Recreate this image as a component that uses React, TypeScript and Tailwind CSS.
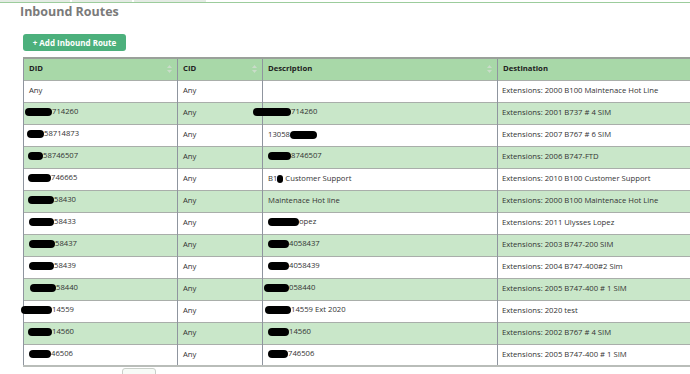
import React from 'react';

type Part = { t?: string; b?: number; ml?: number };

const rows: { did: Part[]; desc: Part[]; dest: string }[] = [
  { did: [{ t: 'Any' }], desc: [], dest: 'Extensions: 2000 B100 Maintenace Hot Line' },
  { did: [{ b: 27, ml: -4 }, { t: '714260' }], desc: [{ b: 38, ml: -15 }, { t: '714260' }], dest: 'Extensions: 2001 B737 # 4 SIM' },
  { did: [{ b: 17, ml: -2 }, { t: '58714873' }], desc: [{ t: '13058' }, { b: 27 }], dest: 'Extensions: 2007 B767 # 6 SIM' },
  { did: [{ b: 15, ml: -1 }, { t: '58746507' }], desc: [{ b: 23 }, { t: '8746507' }], dest: 'Extensions: 2006 B747-FTD' },
  { did: [{ b: 23, ml: -1 }, { t: '746665' }], desc: [{ t: 'B1' }, { b: 6 }, { t: ' Customer Support' }], dest: 'Extensions: 2010 B100 Customer Support' },
  { did: [{ b: 26, ml: -1 }, { t: '58430' }], desc: [{ t: 'Maintenace Hot line' }], dest: 'Extensions: 2000 B100 Maintenace Hot Line' },
  { did: [{ b: 25 }, { t: '58433' }], desc: [{ b: 31 }, { t: 'opez' }], dest: 'Extensions: 2011 Ulysses Lopez' },
  { did: [{ b: 26 }, { t: '58437' }], desc: [{ b: 21 }, { t: '4058437' }], dest: 'Extensions: 2003 B747-200 SIM' },
  { did: [{ b: 25 }, { t: '58439' }], desc: [{ b: 21 }, { t: '4058439' }], dest: 'Extensions: 2004 B747-400#2 Sim' },
  { did: [{ b: 26, ml: 1 }, { t: '58440' }], desc: [{ b: 25, ml: -4 }, { t: '058440' }], dest: 'Extensions: 2005 B747-400 # 1 SIM' },
  { did: [{ b: 31, ml: -8 }, { t: '14559' }], desc: [{ b: 26, ml: -3 }, { t: '14559 Ext 2020' }], dest: 'Extensions: 2020 test' },
  { did: [{ b: 24, ml: -1 }, { t: '14560' }], desc: [{ b: 21 }, { t: '14560' }], dest: 'Extensions: 2002 B767 # 4 SIM' },
  { did: [{ b: 22 }, { t: '46506' }], desc: [{ b: 20 }, { t: '746506' }], dest: 'Extensions: 2005 B747-400 # 1 SIM' },
];

function Cell({ parts }: { parts: Part[] }) {
  return (
    <span className="inline-flex items-center whitespace-pre">
      {parts.map((p, i) =>
        p.b ? (
          <span
            key={i}
            className="inline-block h-[8px] rounded-full bg-black"
            style={{ width: p.b, marginLeft: p.ml ?? 0 }}
          />
        ) : (
          <span key={i}>{p.t}</span>
        )
      )}
    </span>
  );
}

function SortIcon() {
  return (
    <svg width="5" height="8" viewBox="0 0 5 8" className="shrink-0">
      <path d="M2.5 0 L5 3 L0 3 Z" fill="#c9dcc9" />
      <path d="M2.5 8 L5 5 L0 5 Z" fill="#c9dcc9" />
    </svg>
  );
}

export default function App() {
  return (
    <div className="w-[690px] h-[374px] overflow-hidden bg-white" style={{ fontFamily: '"Open Sans", "Liberation Sans", sans-serif' }}>
      <div className="flex h-[3px] border-b border-[#9ccc9c]">
        <div className="w-[70px] bg-[#e4ebe4]" />
        <div className="w-[2px]" />
        <div className="w-[60px] bg-[#e4ebe4]" />
        <div className="w-[2px]" />
        <div className="w-[72px] bg-[#e4ebe4]" />
      </div>
      <h1 className="pl-[20px] pt-[1px] text-[12.5px] leading-[16px] font-bold text-[#7a7a7a]">Inbound Routes</h1>
      <div className="pl-[23px] pt-[14px]">
        <button className="h-[17px] w-[103px] rounded-[3px] bg-[#4cb07c] text-white text-[8px] font-bold leading-none flex items-center justify-center">
          + Add Inbound Route
        </button>
      </div>
      <div className="pl-[23px] pt-[6px]">
        <table className="w-[672px] table-fixed border-collapse text-[7.7px] text-[#333]">
          <colgroup>
            <col className="w-[154px]" />
            <col className="w-[85px]" />
            <col className="w-[235px]" />
            <col />
          </colgroup>
          <thead>
            <tr className="h-[22px] bg-[#a8d8a8] border-t-2 border-[#9aa09a]">
              {['DID', 'CID', 'Description', 'Destination'].map((h, i) => (
                <th key={h} className="border-l border-r border-[#8f959f] px-[5px] text-left font-bold text-[#222]">
                  <div className="flex items-center justify-between">
                    <span>{h}</span>
                    {i < 3 && <SortIcon />}
                  </div>
                </th>
              ))}
            </tr>
          </thead>
          <tbody>
            {rows.map((r, i) => (
              <tr key={i} className={`h-[22px] border-t border-[#a9aeaa] ${i % 2 ? 'bg-[#c9e7c9]' : 'bg-white'}`}>
                <td className="border-l border-r border-[#8f959f] px-[5px]"><Cell parts={r.did} /></td>
                <td className="border-l border-r border-[#8f959f] px-[5px]">Any</td>
                <td className="border-l border-r border-[#8f959f] px-[5px]"><Cell parts={r.desc} /></td>
                <td className="border-l border-r border-[#8f959f] px-[4px] whitespace-nowrap">{r.dest}</td>
              </tr>
            ))}
            <tr className="h-0 border-t-2 border-[#b9bdb9]" />
          </tbody>
        </table>
      </div>
      <div className="pl-[122px] pt-[2px]">
        <div className="h-[10px] w-[34px] rounded-[3px] border border-[#c9cfc9] bg-[#f7fbf7]" />
      </div>
    </div>
  );
}
